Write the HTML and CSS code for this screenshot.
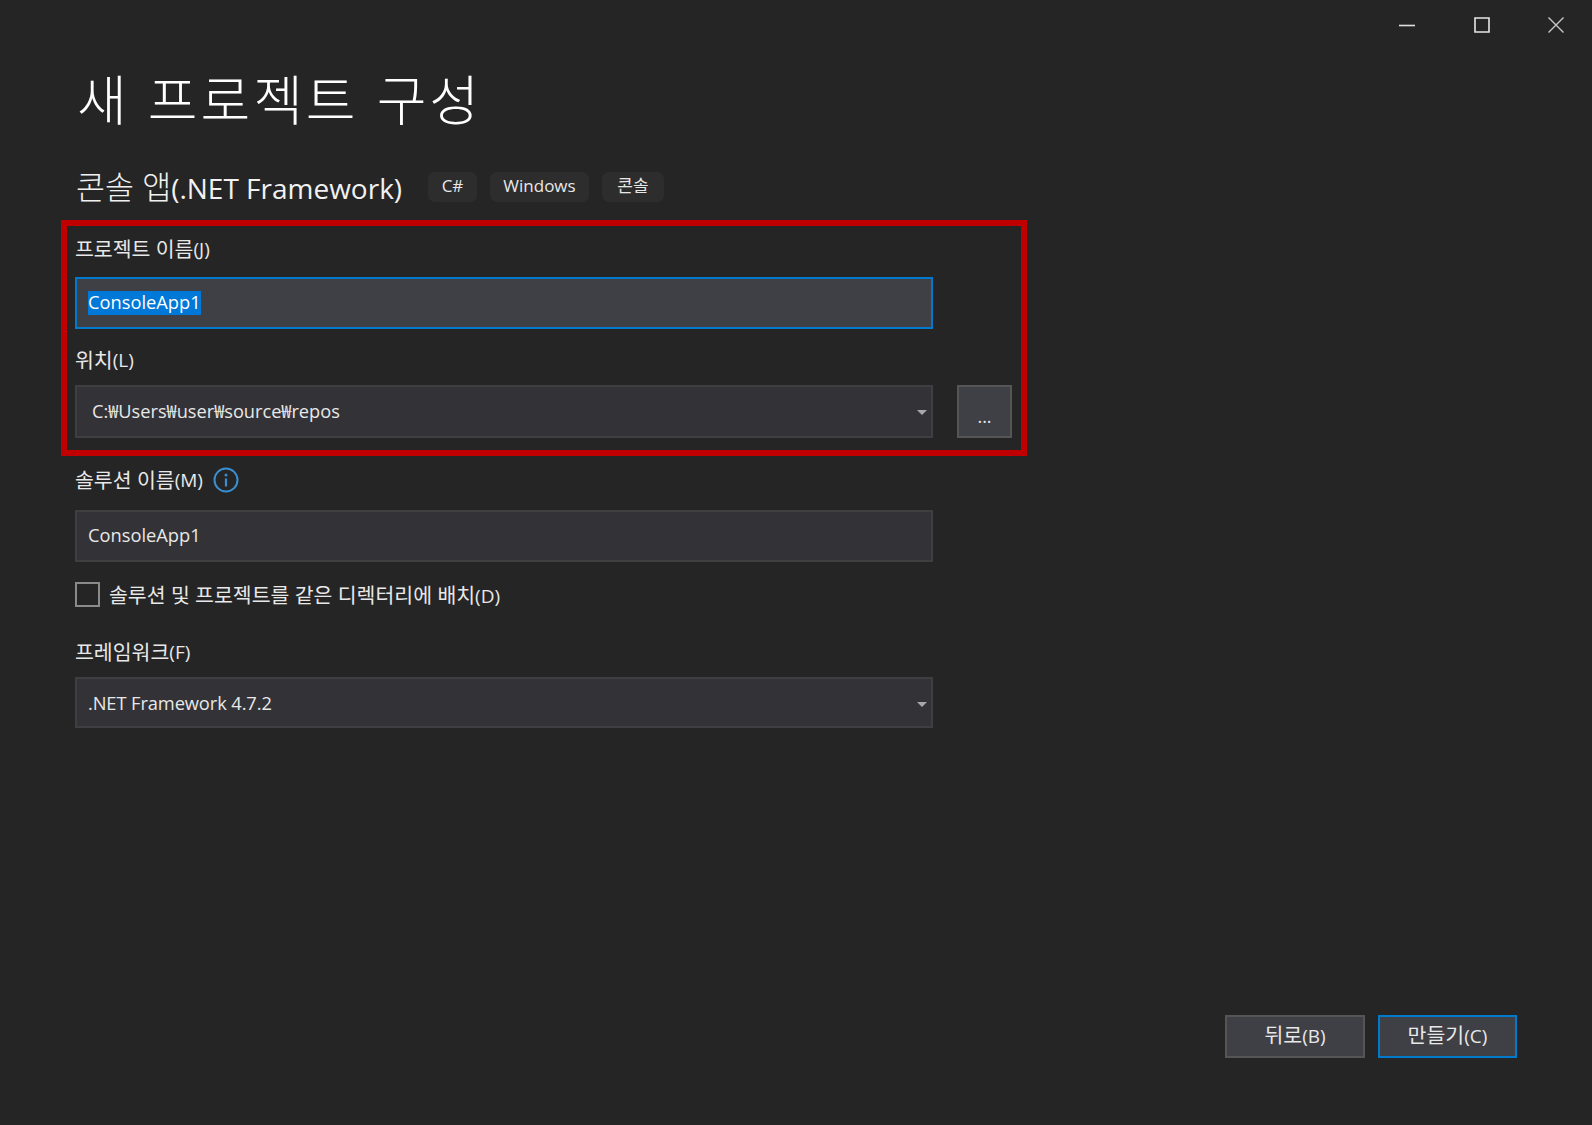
FILE: index.html
```html
<!DOCTYPE html>
<html lang="ko">
<head>
<meta charset="utf-8">
<title>새 프로젝트 구성</title>
<link rel="stylesheet" href="styles.css">
</head>
<body>
<div class="window">
  <div class="controls">
    <svg class="ctl" width="18" height="18" viewBox="0 0 18 18"><path d="M1 9.5h16" stroke="#e0e0e0" stroke-width="1.6"/></svg>
    <svg class="ctl" width="18" height="18" viewBox="0 0 18 18"><path d="M2 2h14v14H2z" fill="none" stroke="#e6e6e6" stroke-width="1.6"/></svg>
    <svg class="ctl ctl-close" width="18" height="18" viewBox="0 0 18 18"><path d="M1.5 1.5l15 15M16.5 1.5l-15 15" stroke="#c8c8c8" stroke-width="1.4"/></svg>
  </div>
  <main class="content">
    <h1 class="title">새 프로젝트 구성</h1>
    <div class="sub">
      <h2 class="subtitle">콘솔 앱<span class="sub-latin">(.NET Framework)</span></h2>
      <span class="tag tag-cs">C#</span>
      <span class="tag tag-win">Windows</span>
      <span class="tag tag-con">콘솔</span>
    </div>
    <section class="highlight">
      <div class="label l-name">프로젝트 이름<span class="key">(J)</span></div>
      <div class="field focus"><span class="sel">ConsoleApp1</span></div>
      <div class="label l-loc">위치<span class="key">(L)</span></div>
      <div class="row">
        <div class="field combo path"><span class="path-text">C:₩Users₩user₩source₩repos</span><span class="arrow"></span></div>
        <div class="browse">...</div>
      </div>
    </section>
    <div class="label l-sol">솔루션 이름<span class="key">(M)</span><svg class="info" width="26" height="26" viewBox="0 0 26 26"><circle cx="13" cy="13" r="11.5" fill="none" stroke="#3a8fd0" stroke-width="2"/><circle cx="13" cy="8" r="1.5" fill="#3a8fd0"/><path d="M13 11.5v8" stroke="#3a8fd0" stroke-width="2.2"/></svg></div>
    <div class="field f-sol"><span class="val">ConsoleApp1</span></div>
    <div class="check">
      <span class="box"></span>
      <span class="check-text">솔루션 및 프로젝트를 같은 디렉터리에 배치<span class="key">(D)</span></span>
    </div>
    <div class="label l-fw">프레임워크<span class="key">(F)</span></div>
    <div class="field combo f-fw"><span class="val">.NET Framework 4.7.2</span><span class="arrow"></span></div>
  </main>
  <footer class="footer">
    <button class="btn">뒤로<span class="key">(B)</span></button>
    <button class="btn primary">만들기<span class="key">(C)</span></button>
  </footer>
</div>
</body>
</html>
```
FILE: styles.css
```css
* { box-sizing: border-box; }
html, body { margin: 0; padding: 0; }
body {
  background: #252526;
  color: #f1f1f1;
  font-family: "Open Sans", "Noto Sans CJK KR", sans-serif;
  font-size: 18px;
}
.window {
  width: 1592px;
  height: 1125px;
  display: flex;
  flex-direction: column;
  overflow: hidden;
}
.controls {
  height: 50px;
  padding: 16px 27px 0 0;
  display: flex;
  justify-content: flex-end;
  gap: 57px;
  flex: none;
}
.ctl { display: block; }
.ctl-close { margin-left: -1px; }
.content { padding-left: 75px; width: 1100px; }
.title {
  margin: 0 0 26px 2px;
  font-size: 54px;
  line-height: 96px;
  height: 96px;
  color: #fff;
  font-family: "Noto Sans CJK KR", sans-serif;
  font-weight: 300;
  letter-spacing: 3px;
  white-space: nowrap;
}
.sub { display: flex; align-items: center; height: 30px; }
.subtitle {
  margin: 0 26px 0 1px;
  font-size: 31.5px;
  font-weight: 300;
  line-height: 30px;
  width: 326px;
  white-space: nowrap;
  flex: none;
}
.sub-latin { font-size: 28px; font-weight: 400; }
.tag {
  height: 30px;
  background: #2d2d2e;
  border-radius: 7px;
  font-size: 17px;
  line-height: 28px;
  text-align: center;
  color: #e8e8e8;
  margin-right: 13px;
}
.tag-cs { width: 49px; }
.tag-win { width: 99px; }
.tag-con { width: 62px; }
.highlight {
  margin: 18px 0 0 -14px;
  width: 966px;
  height: 236px;
  border: 6px solid #c00000;
  padding: 11px 0 0 8px;
}
.label {
  height: 24px;
  line-height: 24px;
  font-size: 20.5px;
  color: #e8e8e8;
  display: flex;
  align-items: center;
  white-space: nowrap;
}
.key { font-size: 19px; }
.l-name { margin-bottom: 16px; }
.l-loc { margin: 19px 0 13px; }
.l-sol { margin: 12px 0 18px; }
.l-fw { margin: 34px 0 13px; }
.info { margin-left: 10px; }
.field {
  position: relative;
  width: 858px;
  height: 52px;
  background: #333337;
  border: 2px solid #3f3f42;
  padding: 0 0 3px 11px;
  display: flex;
  align-items: center;
  font-size: 18.3px;
  color: #e8e8e8;
  white-space: nowrap;
}
.focus { background: #3f3f46; border-color: #007acc; padding-bottom: 0; }
.sel {
  background: #0078d7;
  color: #fff;
  height: 24px;
  line-height: 22px;
}
.row { display: flex; gap: 24px; flex: none; }
.path { height: 53px; padding: 0 0 1px 15px; flex: none; }
.path-text { line-height: 24px; font-size: 18.2px; }
.browse {
  width: 55px;
  height: 53px;
  background: #3f3f46;
  border: 2px solid #555;
  text-align: center;
  line-height: 58px;
  font-size: 18px;
  color: #e8e8e8;
}
.arrow {
  position: absolute;
  right: 4px;
  top: 23px;
  width: 0;
  height: 0;
  border-left: 5px solid transparent;
  border-right: 5px solid transparent;
  border-top: 5px solid #a8a8a8;
}
.check { display: flex; align-items: center; height: 24px; margin-top: 20px; gap: 9px; }
.box {
  width: 25px;
  height: 25px;
  border: 2px solid #8a8a8a;
  flex: none;
}
.check-text { font-size: 20.5px; color: #e8e8e8; white-space: nowrap; line-height: 26px; padding-top: 2px; }
.f-fw { height: 51px; padding-bottom: 0; }
.f-fw .val { letter-spacing: -0.1px; }
.footer {
  margin-top: auto;
  padding: 0 75px 67px 0;
  display: flex;
  justify-content: flex-end;
  gap: 13px;
}
.btn {
  width: 140px;
  height: 43px;
  background: #3f3f46;
  border: 2px solid #555;
  color: #e8e8e8;
  font: inherit;
  font-size: 20.5px;
  padding: 0 0 5px;
}
.primary { border-color: #007acc; width: 139px; }
```
